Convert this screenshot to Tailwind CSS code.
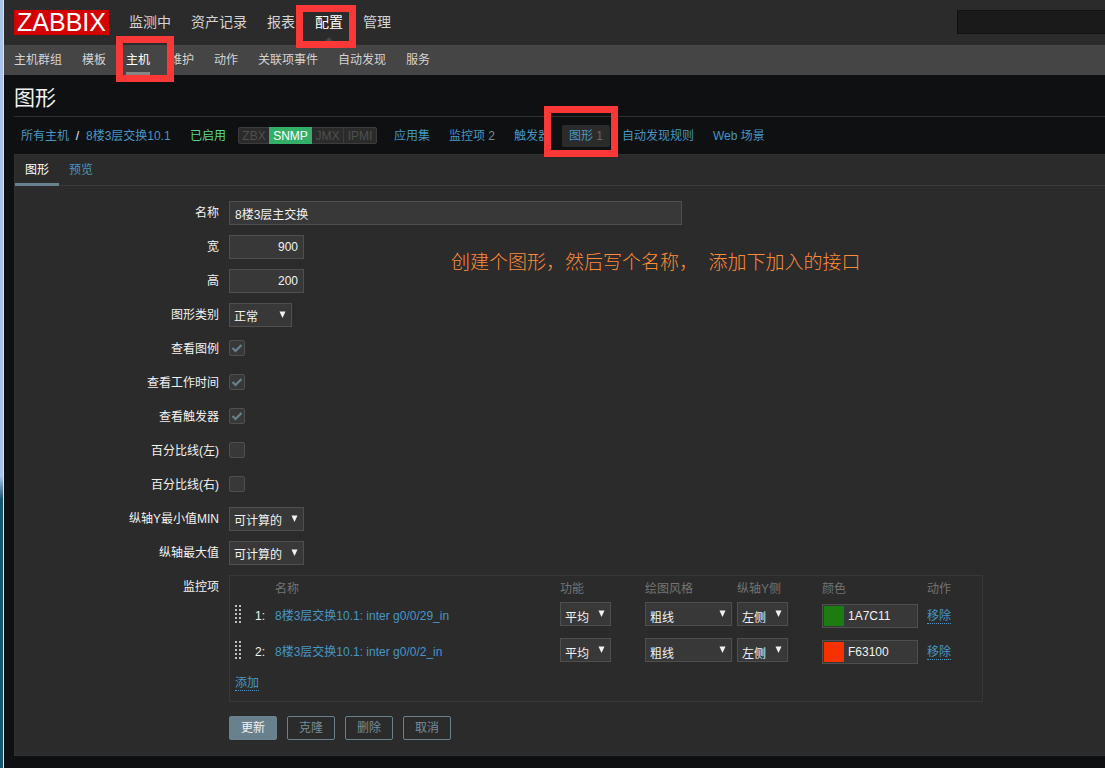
<!DOCTYPE html>
<html lang="zh-CN">
<head>
<meta charset="utf-8">
<title>图形</title>
<script src="https://cdn.jsdelivr.net/npm/@tailwindcss/browser@4"></script>
</head>
<body class="relative flex min-h-screen overflow-x-hidden bg-[#0e1012] font-['Liberation_Sans','Noto_Sans_CJK_SC',sans-serif] text-xs text-[#f2f2f2]">
<div class="w-1 shrink-0 border-r border-[#dfe6ea] bg-linear-to-b from-[#a9c4e6] from-0% via-[#a9c4e6] via-62% to-[#17566f] to-65%"></div>
<div class="flex min-w-0 flex-1 flex-col">
  <header>
    <div class="flex h-[45px] items-center bg-[#2b2b2b] pl-[10px]">
      <a href="#" class="flex h-[25px] w-[95px] items-center justify-center bg-[#d40000] text-[25px] leading-none text-white">ZABBIX</a>
      <nav class="ml-5 flex gap-5 text-sm leading-[45px] text-[#d4d4d4]">
        <a href="#">监测中</a><a href="#">资产记录</a><a href="#">报表</a>
        <a href="#" class="relative text-white">配置
          <span class="absolute bottom-0 left-1/2 -ml-2 border-x-8 border-b-8 border-x-transparent border-b-[#454545]"></span></a>
        <a href="#">管理</a>
      </nav>
      <input type="search" aria-label="搜索" class="mb-px ml-auto h-6 w-[148px] border border-r-0 border-[#111] bg-[#1a1a1a] px-1 outline-none">
    </div>
    <nav class="flex h-[30px] gap-5 bg-[#454545] pl-[10px] leading-[30px] text-[#d4d4d4]">
      <a href="#">主机群组</a><a href="#">模板</a>
      <a href="#" class="border-b-3 border-[#858585] text-white">主机</a>
      <a href="#">维护</a><a href="#">动作</a><a href="#">关联项事件</a><a href="#">自动发现</a><a href="#">服务</a>
    </nav>
  </header>
  <main class="flex-1 pl-[10px]">
    <h1 class="h-[41px] text-[21px] leading-[46px]">图形</h1>
    <div class="flex h-[38px] items-center border-t border-[#303030] pl-[7px] whitespace-nowrap text-[#4796c4]">
      <a href="#" class="w-12">所有主机</a><span class="w-[17px] text-center text-[#f2f2f2]">/</span><a href="#" class="w-[104px]">8楼3层交换10.1</a>
      <a href="#" class="w-12 text-[#59db8f]">已启用</a>
      <div class="flex h-[17px] w-[139px] rounded-xs border border-[#3c3c3c] bg-[#2b2b2b] leading-4 text-[#4f4f4f]">
        <span class="w-[30px] text-center">ZBX</span><span class="-my-px h-[17px] w-[43px] bg-[#34af67] text-center leading-[18px] text-white">SNMP</span><span class="w-8 border-r border-[#3c3c3c] text-center">JMX</span><span class="w-8 text-center">IPMI</span>
      </div>
      <nav class="ml-[17px] flex items-center">
        <a href="#" class="w-[55px]">应用集</a>
        <a href="#" class="w-[65px]">监控项 <span class="text-[#768d99]">2</span></a>
        <a href="#" class="w-12">触发器</a>
        <a href="#" class="h-[22px] w-12 rounded-xs bg-[#2b2b2b] text-center leading-[22px]">图形 <span class="text-[#666]">1</span></a>
        <a href="#" class="ml-3 w-[91px]">自动发现规则</a>
        <a href="#">Web 场景</a>
      </nav>
    </div>
    <section class="border border-r-0 border-[#303030] bg-[#2b2b2b] pb-[15px]">
      <div class="flex h-[31px] border-b border-[#383838] leading-[30px]">
        <button type="button" class="h-[31px] border-b-3 border-[#69808d] px-[10px] text-white">图形</button>
        <button type="button" class="h-[30px] px-[10px] text-[#4796c4]">预览</button>
      </div>
      <form class="mt-[15px] grid grid-cols-[204px_1fr] items-center gap-x-[10px] gap-y-[10px]">
        <label for="name" class="text-right leading-6">名称</label>
        <input id="name" value="8楼3层主交换" class="h-6 w-[453px] border border-[#4f4f4f] bg-[#383838] px-[5px] outline-none">
        <label for="w" class="text-right leading-6">宽</label>
        <input id="w" value="900" class="h-6 w-[75px] border border-[#4f4f4f] bg-[#383838] px-[5px] text-right outline-none">
        <label for="h" class="text-right leading-6">高</label>
        <input id="h" value="200" class="h-6 w-[75px] border border-[#4f4f4f] bg-[#383838] px-[5px] text-right outline-none">
        <label for="type" class="text-right leading-6">图形类别</label>
        <div class="relative h-6 w-[63px]"><select id="type" class="block size-full appearance-none border border-[#4f4f4f] bg-[#383838] pt-[3px] pl-1 outline-none"><option>正常</option></select><svg class="pointer-events-none absolute top-2 right-[6px]" width="7" height="7" viewBox="0 0 7 7" fill="#f2f2f2"><path d="M.5 .5h6L3.500 7z"/></svg></div>

        <label for="c1" class="text-right leading-6">查看图例</label>
        <div class="relative mb-0.5 size-4"><input id="c1" type="checkbox" checked class="block size-4 appearance-none rounded-xs border border-[#4f4f4f] bg-[#383838]"><svg class="pointer-events-none absolute inset-0" width="16" height="16" viewBox="0 0 16 16" fill="none" stroke="#69808d" stroke-width="2.200"><path d="M3.500 8l3 3L12.500 5"/></svg></div>
        <label for="c2" class="text-right leading-6">查看工作时间</label>
        <div class="relative mb-0.5 size-4"><input id="c2" type="checkbox" checked class="block size-4 appearance-none rounded-xs border border-[#4f4f4f] bg-[#383838]"><svg class="pointer-events-none absolute inset-0" width="16" height="16" viewBox="0 0 16 16" fill="none" stroke="#69808d" stroke-width="2.200"><path d="M3.500 8l3 3L12.500 5"/></svg></div>
        <label for="c3" class="text-right leading-6">查看触发器</label>
        <div class="relative mb-0.5 size-4"><input id="c3" type="checkbox" checked class="block size-4 appearance-none rounded-xs border border-[#4f4f4f] bg-[#383838]"><svg class="pointer-events-none absolute inset-0" width="16" height="16" viewBox="0 0 16 16" fill="none" stroke="#69808d" stroke-width="2.200"><path d="M3.500 8l3 3L12.500 5"/></svg></div>
        <label for="c4" class="text-right leading-6">百分比线(左)</label>
        <input id="c4" type="checkbox" class="mb-0.5 block size-4 appearance-none rounded-xs border border-[#4f4f4f] bg-[#383838]">
        <label for="c5" class="text-right leading-6">百分比线(右)</label>
        <input id="c5" type="checkbox" class="mb-0.5 block size-4 appearance-none rounded-xs border border-[#4f4f4f] bg-[#383838]">

        <label for="ymin" class="text-right leading-6">纵轴Y最小值MIN</label>
        <div class="relative h-6 w-[75px]"><select id="ymin" class="block size-full appearance-none border border-[#4f4f4f] bg-[#383838] pt-[3px] pl-1 outline-none"><option>可计算的</option></select><svg class="pointer-events-none absolute top-2 right-[6px]" width="7" height="7" viewBox="0 0 7 7" fill="#f2f2f2"><path d="M.5 .5h6L3.500 7z"/></svg></div>
        <label for="ymax" class="text-right leading-6">纵轴最大值</label>
        <div class="relative h-6 w-[75px]"><select id="ymax" class="block size-full appearance-none border border-[#4f4f4f] bg-[#383838] pt-[3px] pl-1 outline-none"><option>可计算的</option></select><svg class="pointer-events-none absolute top-2 right-[6px]" width="7" height="7" viewBox="0 0 7 7" fill="#f2f2f2"><path d="M.5 .5h6L3.500 7z"/></svg></div>

        <span class="self-start text-right leading-6">监控项</span>
        <div class="h-[127px] w-[754px] border border-[#383838] pl-[5px]">
          <table class="w-[747px] table-fixed text-left align-top leading-6">
            <colgroup><col class="w-[15px]"><col class="w-[25px]"><col class="w-[285px]"><col class="w-[85px]"><col class="w-[92px]"><col class="w-[85px]"><col class="w-[105px]"><col class="w-[55px]"></colgroup>
            <thead><tr class="h-[26px] text-[#737373]"><td></td><td></td><th class="font-normal">名称</th><th class="font-normal">功能</th><th class="font-normal">绘图风格</th><th class="font-normal">纵轴Y侧</th><th class="font-normal">颜色</th><th class="font-normal">动作</th></tr></thead>
            <tbody>
              <tr class="h-9 align-top">
                <td><svg class="mt-[3px]" width="6" height="18" viewBox="0 0 6 18" fill="#b8c0c4"><path d="M0 0h2v2H0zM4 0h2v2H4zM0 4h2v2H0zM4 4h2v2H4zM0 8h2v2H0zM4 8h2v2H4zM0 12h2v2H0zM4 12h2v2H4zM0 16h2v2H0zM4 16h2v2H4z"/></svg></td>
                <td class="pt-0.5 pr-[10px] text-right">1:</td>
                <td class="pt-0.5"><a href="#" class="text-[#4796c4]">8楼3层交换10.1: inter g0/0/29_in</a></td>
                <td><div class="relative h-6 w-[51px]"><select aria-label="功能" class="block size-full appearance-none border border-[#4f4f4f] bg-[#383838] pt-[3px] pl-1 outline-none"><option>平均</option></select><svg class="pointer-events-none absolute top-2 right-[6px]" width="7" height="7" viewBox="0 0 7 7" fill="#f2f2f2"><path d="M.5 .5h6L3.500 7z"/></svg></div></td>
                <td><div class="relative h-6 w-[87px]"><select aria-label="绘图风格" class="block size-full appearance-none border border-[#4f4f4f] bg-[#383838] pt-[3px] pl-1 outline-none"><option>粗线</option></select><svg class="pointer-events-none absolute top-2 right-[6px]" width="7" height="7" viewBox="0 0 7 7" fill="#f2f2f2"><path d="M.5 .5h6L3.500 7z"/></svg></div></td>
                <td><div class="relative h-6 w-[51px]"><select aria-label="纵轴Y侧" class="block size-full appearance-none border border-[#4f4f4f] bg-[#383838] pt-[3px] pl-1 outline-none"><option>左侧</option></select><svg class="pointer-events-none absolute top-2 right-[6px]" width="7" height="7" viewBox="0 0 7 7" fill="#f2f2f2"><path d="M.5 .5h6L3.500 7z"/></svg></div></td>
                <td><div class="mt-0.5 flex h-6 w-24 border border-[#4f4f4f] bg-[#383838] p-px"><button type="button" aria-label="选择颜色" class="w-5 shrink-0 bg-[#1a7c11]"></button><input aria-label="颜色" value="1A7C11" class="w-full min-w-0 bg-transparent pl-1 outline-none"></div></td>
                <td><button type="button" class="mt-[6px] h-4 border-b border-dotted border-[#4796c4] leading-4 text-[#4796c4]">移除</button></td>
              </tr>
              <tr class="h-9 align-top">
                <td><svg class="mt-[3px]" width="6" height="18" viewBox="0 0 6 18" fill="#b8c0c4"><path d="M0 0h2v2H0zM4 0h2v2H4zM0 4h2v2H0zM4 4h2v2H4zM0 8h2v2H0zM4 8h2v2H4zM0 12h2v2H0zM4 12h2v2H4zM0 16h2v2H0zM4 16h2v2H4z"/></svg></td>
                <td class="pt-0.5 pr-[10px] text-right">2:</td>
                <td class="pt-0.5"><a href="#" class="text-[#4796c4]">8楼3层交换10.1: inter g0/0/2_in</a></td>
                <td><div class="relative h-6 w-[51px]"><select aria-label="功能" class="block size-full appearance-none border border-[#4f4f4f] bg-[#383838] pt-[3px] pl-1 outline-none"><option>平均</option></select><svg class="pointer-events-none absolute top-2 right-[6px]" width="7" height="7" viewBox="0 0 7 7" fill="#f2f2f2"><path d="M.5 .5h6L3.500 7z"/></svg></div></td>
                <td><div class="relative h-6 w-[87px]"><select aria-label="绘图风格" class="block size-full appearance-none border border-[#4f4f4f] bg-[#383838] pt-[3px] pl-1 outline-none"><option>粗线</option></select><svg class="pointer-events-none absolute top-2 right-[6px]" width="7" height="7" viewBox="0 0 7 7" fill="#f2f2f2"><path d="M.5 .5h6L3.500 7z"/></svg></div></td>
                <td><div class="relative h-6 w-[51px]"><select aria-label="纵轴Y侧" class="block size-full appearance-none border border-[#4f4f4f] bg-[#383838] pt-[3px] pl-1 outline-none"><option>左侧</option></select><svg class="pointer-events-none absolute top-2 right-[6px]" width="7" height="7" viewBox="0 0 7 7" fill="#f2f2f2"><path d="M.5 .5h6L3.500 7z"/></svg></div></td>
                <td><div class="mt-0.5 flex h-6 w-24 border border-[#4f4f4f] bg-[#383838] p-px"><button type="button" aria-label="选择颜色" class="w-5 shrink-0 bg-[#f63100]"></button><input aria-label="颜色" value="F63100" class="w-full min-w-0 bg-transparent pl-1 outline-none"></div></td>
                <td><button type="button" class="mt-[6px] h-4 border-b border-dotted border-[#4796c4] leading-4 text-[#4796c4]">移除</button></td>
              </tr>
            </tbody>
          </table>
          <button type="button" class="mt-px block h-4 border-b border-dotted border-[#4796c4] leading-4 text-[#4796c4]">添加</button>
        </div>
        <div class="col-start-2 mt-1 flex gap-[10px] leading-[22px] text-[#768d99]">
          <button type="submit" class="h-6 w-12 rounded-xs border border-[#69808d] bg-[#69808d] text-[#f2f2f2]">更新</button>
          <button type="button" class="h-6 w-12 rounded-xs border border-[#69808d]">克隆</button>
          <button type="button" class="h-6 w-12 rounded-xs border border-[#69808d]">删除</button>
          <button type="button" class="h-6 w-12 rounded-xs border border-[#69808d]">取消</button>
        </div>
      </form>
    </section>
  </main>
</div>
<!-- Tutorial annotations drawn over the page -->
<div class="pointer-events-none absolute top-[5px] left-[296px] h-[43px] w-[60px] border-7 border-[#fb3838]"></div>
<div class="pointer-events-none absolute top-9 left-[116px] h-[46px] w-[58px] border-7 border-[#fb3838]"></div>
<div class="pointer-events-none absolute top-[106px] left-[544px] h-[51px] w-[74px] border-7 border-[#fb3838]"></div>
<p class="pointer-events-none absolute top-[249px] left-[451px] text-[19px] leading-7 font-light whitespace-nowrap text-[#ff8a38]">创建个图形，然后写个名称，&nbsp; 添加下加入的接口</p>
</body>
</html>
